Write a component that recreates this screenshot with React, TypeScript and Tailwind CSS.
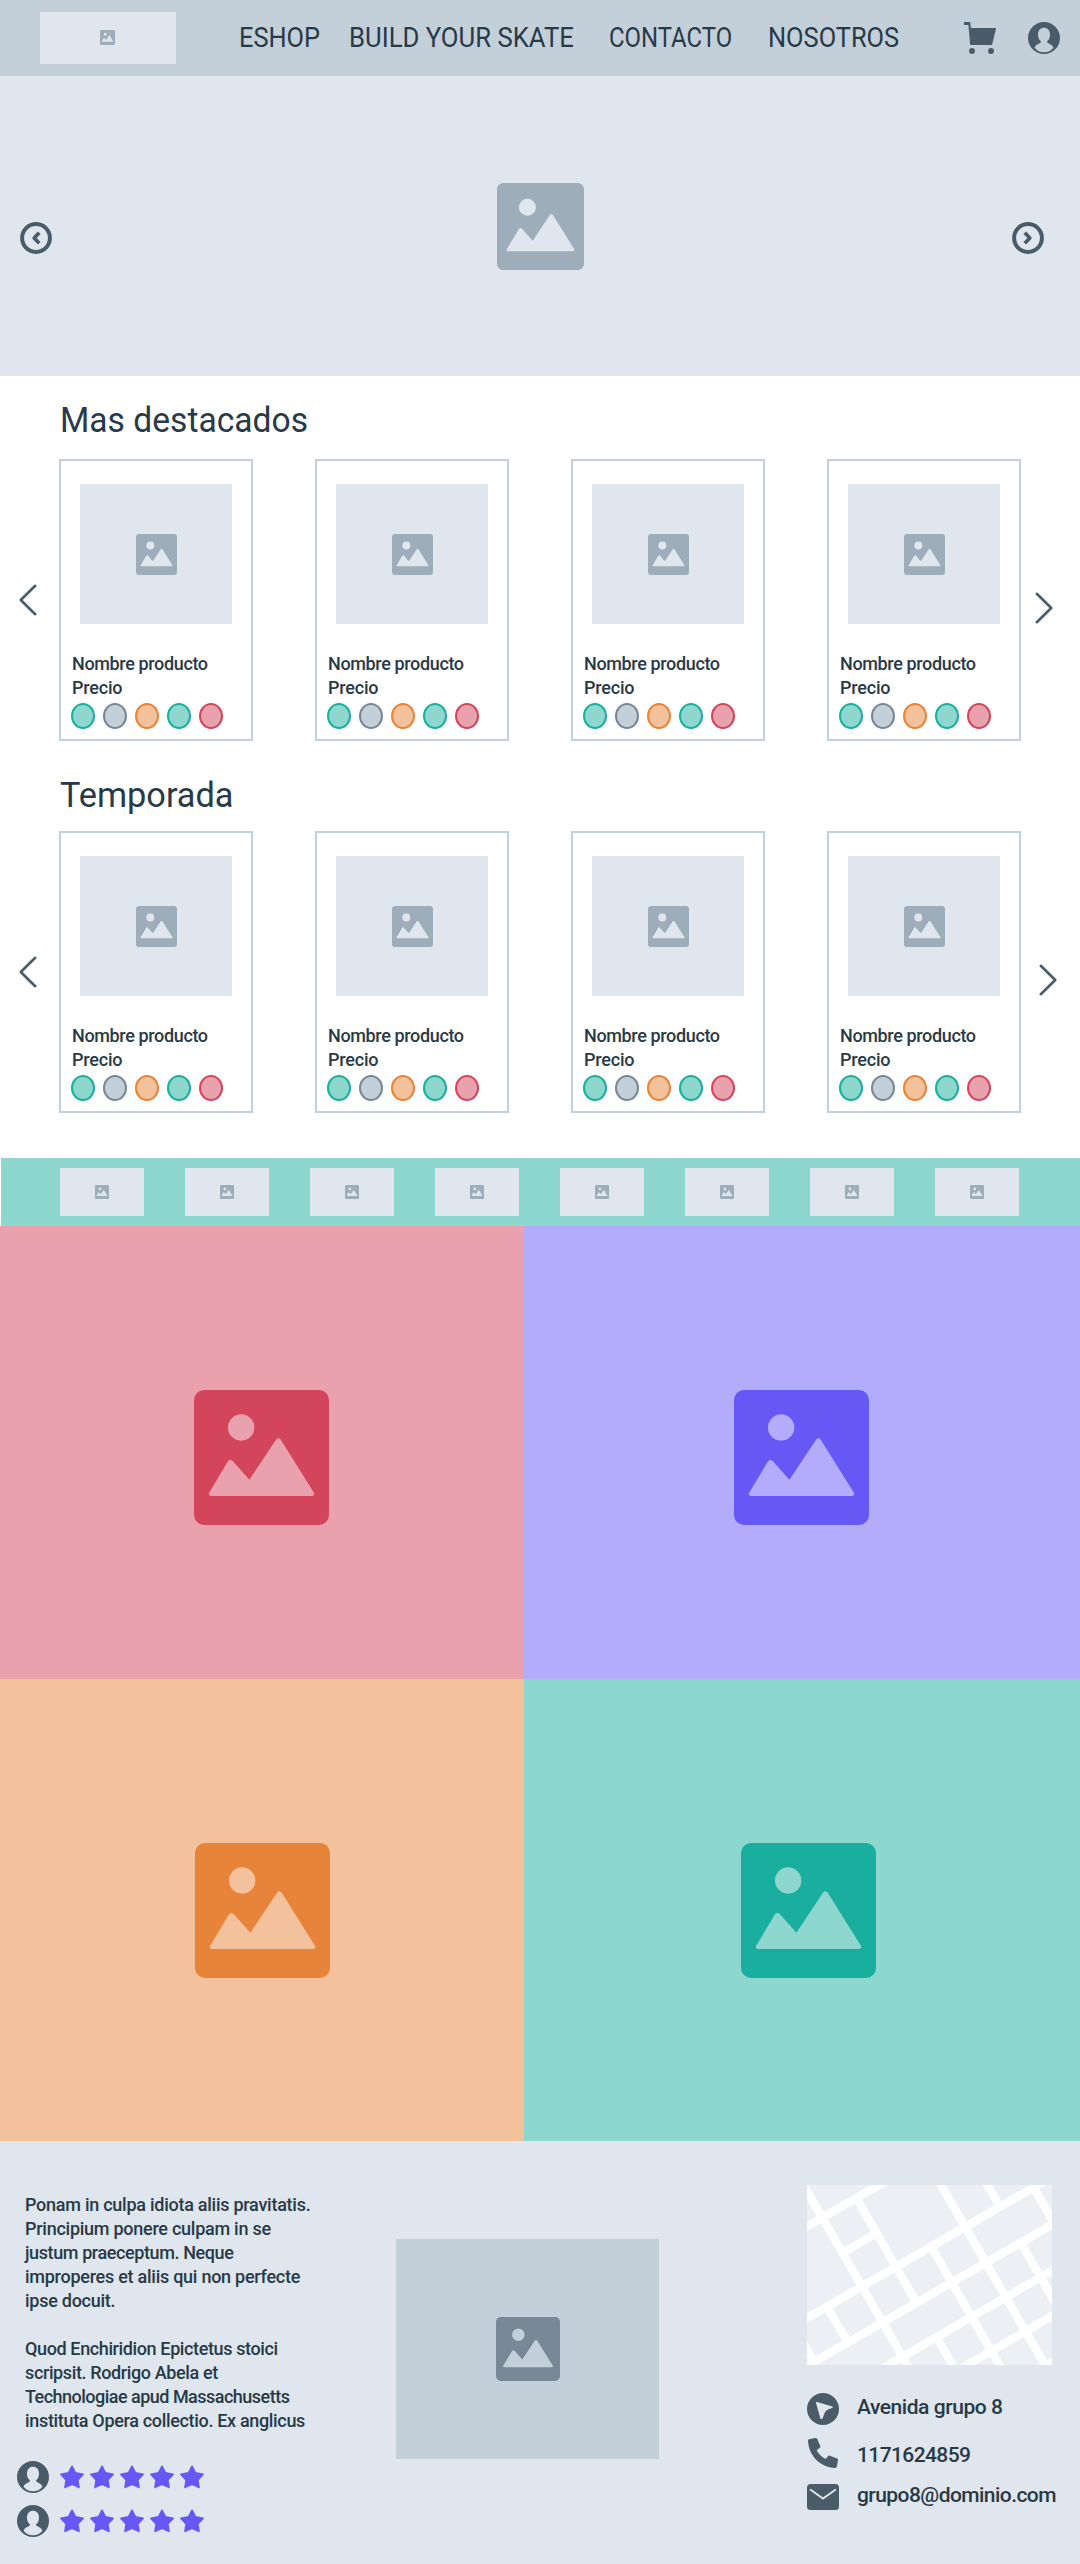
import React from "react";

type IconProps = { className: string };

function Picture({ className }: IconProps) {
  return (
    <svg viewBox="0 0 136 136" className={className} aria-hidden="true">
      <path
        fill="currentColor"
        fillRule="evenodd"
        d="M10 0H126A10 10 0 0 1 136 10V126A10 10 0 0 1 126 136H10A10 10 0 0 1 0 126V10A10 10 0 0 1 10 0ZM47.5 24.5A13.3 13.3 0 1 0 47.5 51.1A13.3 13.3 0 1 0 47.5 24.5ZM17 106.8H119Q122.2 106 120.8 103.4L87.4 50Q85 47.4 82.6 50L55.8 90.3L39 71.4Q36.4 69.4 34.4 71.6L15.3 103.4Q14 106 17 106.8Z"
      />
    </svg>
  );
}

function Avatar({ className }: IconProps) {
  return (
    <svg viewBox="0 0 32 32" className={className} aria-hidden="true">
      <path
        fill="#4a5c6a"
        fillRule="evenodd"
        d="M16 0A16 16 0 1 1 16 32A16 16 0 1 1 16 0ZM10 12.2C10 15.5 11 17.8 12.4 18.8C13.1 19.4 13.1 20.2 12.4 20.8C11 22 7.5 22.6 6.6 25.8C9 28.9 12.2 30.3 16 30.3S23 28.9 25.4 25.8C24.5 22.6 21 22 19.6 20.8C18.9 20.2 18.9 19.4 19.6 18.8C21 17.8 22 15.5 22 12.2C22 8.4 19.4 5.7 16 5.7S10 8.4 10 12.2Z"
      />
    </svg>
  );
}

function Cart() {
  return (
    <svg viewBox="0 0 32 32" className="size-8 text-[#4a5c6a]" aria-hidden="true">
      <path fill="currentColor" d="M0 0H6.2L6.9 6H31.5Q32.2 6 32 6.8L28.2 22.2Q28 23 27.2 23H7Q6.2 23 6.1 22.2L4.4 3H0Z" />
      <circle cx="8" cy="29" r="3" fill="currentColor" />
      <circle cx="27" cy="29" r="3" fill="currentColor" />
    </svg>
  );
}

function RoundArrow({ right = false }: { right?: boolean }) {
  return (
    <svg viewBox="0 0 32 32" className="size-8" fill="none" stroke="#4a5c6a" aria-hidden="true">
      <circle cx="16" cy="16" r="13.9" strokeWidth="4" />
      <path strokeWidth="3.7" strokeLinejoin="round" d={right ? "M12.8 10.8L17.8 16L12.8 21.2" : "M19.2 10.8L14.2 16L19.2 21.2"} />
    </svg>
  );
}

function Chevron({ right = false, className }: { right?: boolean; className: string }) {
  return (
    <svg viewBox="0 0 18 32" className={`h-8 w-[18px] shrink-0 ${className}`} fill="none" stroke="#4a5c6a" aria-hidden="true">
      <path strokeWidth="2.6" strokeLinecap="round" strokeLinejoin="round" d={right ? "M1.8 1.8L16.2 16L1.8 30.2" : "M16.2 1.8L1.8 16L16.2 30.2"} />
    </svg>
  );
}

function Star() {
  return (
    <svg viewBox="0 0 24 24" className="size-6" aria-hidden="true">
      <path
        fill="#6658f5"
        stroke="#6658f5"
        strokeWidth="1.8"
        strokeLinejoin="round"
        d="M12 1.4L15.4 8L23 9.4L17.8 14.8L18.9 22.3L12 19.2L5.1 22.3L6.2 14.8L1 9.4L8.6 8Z"
      />
    </svg>
  );
}

const swatches = [
  "border-[#1aae9f] bg-[#8dd7cf]",
  "border-[#788896] bg-[#c3cfd9]",
  "border-[#e8833a] bg-[#f4c19d]",
  "border-[#1aae9f] bg-[#8dd7cf]",
  "border-[#d3455b] bg-[#e9a2ad]",
];

function ProductCard() {
  return (
    <article className="h-[282px] w-[194px] border-2 border-[#c3cfd9]">
      <div className="mt-[23px] ml-[19px] flex h-[140px] w-[152px] items-center justify-center bg-[#dfe6ee]">
        <Picture className="size-[41px] text-[#9eadba]" />
      </div>
      <div className="mt-7 ml-[11px] text-[18px] leading-6 font-medium">
        <p className="tracking-[-0.36px]">Nombre producto</p>
        <p className="tracking-[-0.2px]">Precio</p>
      </div>
      <div className="mt-[3px] ml-2.5 flex gap-2">
        {swatches.map((swatch, i) => (
          <span key={i} className={`h-[26px] w-6 rounded-[50%] border-2 ${swatch}`} />
        ))}
      </div>
    </article>
  );
}

function ProductRow({ className, nextClass }: { className: string; nextClass: string }) {
  return (
    <div className={`flex items-start ${className}`}>
      <Chevron className="mt-[125px] ml-[19px]" />
      <div className="ml-[22px] flex gap-[62px]">
        {[0, 1, 2, 3].map((i) => (
          <ProductCard key={i} />
        ))}
      </div>
      <Chevron right className={`mt-[133px] ${nextClass}`} />
    </div>
  );
}

function StreetMap() {
  return (
    <svg viewBox="0 0 245 180" className="h-[180px] w-[245px]" aria-hidden="true">
      <rect width="245" height="180" fill="#ecf0f5" />
      <g stroke="#fff" strokeWidth="8.2" fill="none">
        <path d="M-10 47.3L90 -10.4M-10 139L260 -16.8M-10 186.8L260 31M60 192.2L260 77M130 197.4L260 122.4M205 200L260 168.4" />
        <path d="M36 67.5L68 49M-9.4 -10L106 190M50.5 15L108 115M126 65L197 188M128.2 -10L244 190.5M174.7 -10L192 20M228 5L254 50M215 60L260 138M22 125L40 156M131 155L152 191M-6 154L8 178" />
      </g>
    </svg>
  );
}

const contactText = "ml-[18px] text-[21px] leading-8 font-medium";

export default function App() {
  return (
    <div className="w-[1080px] bg-white font-['Roboto',sans-serif] text-[#283a48]">
      <header className="flex h-[76px] items-center bg-[#c3cfd9]">
        <div className="ml-10 flex h-[52px] w-[136px] items-center justify-center bg-[#dfe6ee]">
          <Picture className="mr-px mb-px size-[15px] text-[#9eadba]" />
        </div>
        <nav className="ml-[63px] flex w-[725px] text-[27px] leading-8 font-[450] whitespace-nowrap">
          <a className="w-[110px] origin-left scale-x-[0.94]">ESHOP</a>
          <a className="w-[259.5px] origin-left scale-x-[0.952]">BUILD YOUR SKATE</a>
          <a className="w-[159.5px] origin-left scale-x-[0.886]">CONTACTO</a>
          <a className="origin-left scale-x-[0.94]">NOSOTROS</a>
        </nav>
        <Cart />
        <Avatar className="ml-8 size-8" />
      </header>

      <section className="flex h-[300px] items-center justify-between bg-[#dfe6ee] pr-9 pl-5">
        <div className="pt-6">
          <RoundArrow />
        </div>
        <Picture className="ml-4 size-[87px] text-[#9eadba]" />
        <div className="pt-6">
          <RoundArrow right />
        </div>
      </section>

      <section className="pt-[25px]">
        <h2 className="ml-[60px] h-10 origin-left scale-x-[0.96] text-[35px] leading-10">Mas destacados</h2>
        <ProductRow className="mt-[18px]" nextClass="ml-[14px]" />
      </section>
      <section className="pt-[35px]">
        <h2 className="ml-[60px] h-10 origin-left scale-x-[0.98] text-[35px] leading-10">Temporada</h2>
        <ProductRow className="mt-[15px]" nextClass="ml-[18px]" />
      </section>

      <section className="mt-[45px] ml-px flex h-[68px] items-center gap-[41px] bg-[#8dd7cf] pl-[59px]">
        {[0, 1, 2, 3, 4, 5, 6, 7].map((i) => (
          <div key={i} className="flex h-12 w-[84px] items-center justify-center bg-[#dfe6ee]">
            <Picture className="size-3.5 text-[#9eadba]" />
          </div>
        ))}
      </section>

      <section>
        <div className="flex h-[453px]">
          <div className="flex w-[523px] items-center justify-center bg-[#e9a2ad] pt-[9px]">
            <Picture className="size-[135px] text-[#d3455b]" />
          </div>
          <div className="flex flex-1 items-center justify-center bg-[#b2acfa] pt-[9px]">
            <Picture className="size-[135px] text-[#6658f5]" />
          </div>
        </div>
        <div className="flex h-[462px]">
          <div className="flex w-[524px] items-center justify-center bg-[#f4c19d]">
            <Picture className="size-[135px] text-[#e8833a]" />
          </div>
          <div className="flex flex-1 items-center justify-center bg-[#8dd7cf] pl-3">
            <Picture className="size-[135px] text-[#1aae9f]" />
          </div>
        </div>
      </section>

      <footer className="flex h-[423px] items-start bg-[#dfe6ee]">
        <div className="w-[396px] pt-[52px]">
          <div className="ml-[25px] text-[18px] leading-6 font-medium tracking-[-0.26px] whitespace-nowrap">
            <p>
              Ponam in culpa idiota aliis pravitatis.
              <br />
              Principium ponere culpam in se
              <br />
              <span className="tracking-[-0.4px]">justum praeceptum. Neque</span>
              <br />
              improperes et aliis qui non perfecte
              <br />
              ipse docuit.
            </p>
            <p className="mt-6">
              <span className="tracking-[-0.38px]">Quod Enchiridion Epictetus stoici</span>
              <br />
              <span className="tracking-[-0.38px]">scripsit. Rodrigo Abela et</span>
              <br />
              <span className="tracking-[-0.52px]">Technologiae apud Massachusetts</span>
              <br />
              <span className="tracking-[-0.33px]">instituta Opera collectio. Ex anglicus</span>
            </p>
          </div>
          <div className="mt-7 ml-[17px] flex flex-col gap-3">
            {[0, 1].map((row) => (
              <div key={row} className="flex items-center gap-[11px]">
                <Avatar className="size-8" />
                <div className="flex gap-1.5">
                  {[0, 1, 2, 3, 4].map((i) => (
                    <Star key={i} />
                  ))}
                </div>
              </div>
            ))}
          </div>
        </div>

        <div className="mt-[98px] flex h-[220px] w-[263px] items-center justify-center bg-[#c3cfd9]">
          <Picture className="size-[64px] text-[#788896]" />
        </div>

        <div className="mt-11 ml-[148px]">
          <StreetMap />
          <div className="mt-[26px] flex items-start">
            <svg viewBox="0 0 32 32" className="mt-0.5 size-8" aria-hidden="true">
              <circle cx="16" cy="16" r="16" fill="#4a5c6a" />
              <path fill="#dfe6ee" d="M10.1 8.9L25.4 13.4Q26.6 14.2 25.2 15C21.6 15.8 18.8 17.2 17.8 19.6L15.5 25.4Q14.4 26.6 13.4 25.4L9 10Q9 8.7 10.1 8.9Z" />
            </svg>
            <span className={`${contactText} tracking-[-0.45px]`}>Avenida grupo 8</span>
          </div>
          <div className="mt-3.5 flex items-start">
            <svg viewBox="0 0 30 30" className="-mt-px mr-px ml-px size-[30px]" aria-hidden="true">
              <path
                fill="#4a5c6a"
                d="M2 1L7.5 0C8.3 0 8.9.2 9.2 1L12.3 8C12.5 8.8 12.4 9.3 11.8 9.8L8.6 12.6C10.8 16 13.5 18.8 17.6 21L20 18.2C20.5 17.6 21 17.4 21.8 17.7L29.2 20.6C30 21 30.1 21.5 30 22.3L28.8 28.6C28.5 29.6 28 30 27 30C12 29 1 18 0 3C0 1.8.6 1.2 2 1Z"
              />
            </svg>
            <span className={`${contactText} tracking-[-0.6px]`}>1171624859</span>
          </div>
          <div className="mt-2 flex items-start">
            <svg viewBox="0 0 32 26" className="mt-[5px] h-[26px] w-8" aria-hidden="true">
              <rect width="32" height="26" rx="3.5" fill="#4a5c6a" />
              <path d="M3.6 5.7L16 14.6L28.4 5.7" fill="none" stroke="#dfe6ee" strokeWidth="1.8" strokeLinecap="round" />
            </svg>
            <span className={`${contactText} tracking-[-0.55px]`}>grupo8@dominio.com</span>
          </div>
        </div>
      </footer>
    </div>
  );
}
